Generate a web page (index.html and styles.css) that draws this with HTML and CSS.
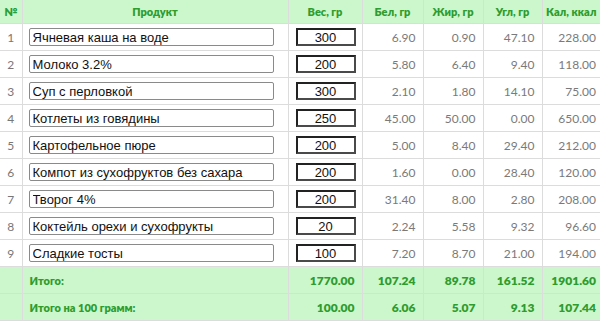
FILE: index.html
```html
<!DOCTYPE html>
<html>
<head>
<meta charset="utf-8">
<link rel="stylesheet" href="styles.css">
</head>
<body>
<table class="tbl">
  <colgroup>
    <col class="c-n"><col class="c-p"><col class="c-w"><col class="c-b"><col class="c-f"><col class="c-u"><col class="c-k">
  </colgroup>
  <thead>
    <tr><th>№</th><th>Продукт</th><th>Вес, гр</th><th>Бел, гр</th><th>Жир, гр</th><th>Угл, гр</th><th>Кал, ккал</th></tr>
  </thead>
  <tbody>
    <tr><td class="num">1</td><td><input class="name" value="Ячневая каша на воде"></td><td class="wc"><input class="wt" value="300"></td><td class="v">6.90</td><td class="v">0.90</td><td class="v">47.10</td><td class="v last">228.00</td></tr>
    <tr><td class="num">2</td><td><input class="name" value="Молоко 3.2%"></td><td class="wc"><input class="wt" value="200"></td><td class="v">5.80</td><td class="v">6.40</td><td class="v">9.40</td><td class="v last">118.00</td></tr>
    <tr><td class="num">3</td><td><input class="name" value="Суп с перловкой"></td><td class="wc"><input class="wt" value="300"></td><td class="v">2.10</td><td class="v">1.80</td><td class="v">14.10</td><td class="v last">75.00</td></tr>
    <tr><td class="num">4</td><td><input class="name" value="Котлеты из говядины"></td><td class="wc"><input class="wt" value="250"></td><td class="v">45.00</td><td class="v">50.00</td><td class="v">0.00</td><td class="v last">650.00</td></tr>
    <tr><td class="num">5</td><td><input class="name" value="Картофельное пюре"></td><td class="wc"><input class="wt" value="200"></td><td class="v">5.00</td><td class="v">8.40</td><td class="v">29.40</td><td class="v last">212.00</td></tr>
    <tr><td class="num">6</td><td><input class="name" value="Компот из сухофруктов без сахара"></td><td class="wc"><input class="wt" value="200"></td><td class="v">1.60</td><td class="v">0.00</td><td class="v">28.40</td><td class="v last">120.00</td></tr>
    <tr><td class="num">7</td><td><input class="name" value="Творог 4%"></td><td class="wc"><input class="wt" value="200"></td><td class="v">31.40</td><td class="v">8.00</td><td class="v">2.80</td><td class="v last">208.00</td></tr>
    <tr><td class="num">8</td><td><input class="name" value="Коктейль орехи и сухофрукты"></td><td class="wc"><input class="wt" value="20"></td><td class="v">2.24</td><td class="v">5.58</td><td class="v">9.32</td><td class="v last">96.60</td></tr>
    <tr><td class="num">9</td><td><input class="name" value="Сладкие тосты"></td><td class="wc"><input class="wt" value="100"></td><td class="v">7.20</td><td class="v">8.70</td><td class="v">21.00</td><td class="v last">194.00</td></tr>
  </tbody>
  <tfoot>
    <tr><td></td><td class="lbl">Итого:</td><td class="t">1770.00</td><td class="t">107.24</td><td class="t">89.78</td><td class="t">161.52</td><td class="t last">1901.60</td></tr>
    <tr><td></td><td class="lbl">Итого на 100 грамм:</td><td class="t">100.00</td><td class="t">6.06</td><td class="t">5.07</td><td class="t">9.13</td><td class="t last">107.44</td></tr>
  </tfoot>
</table>
</body>
</html>
```
FILE: styles.css
```css
html, body {
  margin: 0;
  padding: 0;
  background: #fff;
  overflow: hidden;
}
.tbl {
  border-collapse: collapse;
  table-layout: fixed;
  width: 600px;
  font-family: Lato, "Open Sans", sans-serif;
}
.c-n { width: 22px; }
.c-p { width: 266px; }
.c-w { width: 74px; }
.c-b { width: 61px; }
.c-f { width: 60px; }
.c-u { width: 59px; }
.c-k { width: 58px; }
.tbl th, .tbl td {
  border: 1px solid #dcdcdc;
  padding: 0;
}
.tbl tr:first-child th { border-top: none; }
.tbl th:first-child, .tbl td:first-child { border-left: none; }
.tbl th:last-child, .tbl td:last-child { border-right: none; }
.tbl th {
  height: 23px;
  background: #ccf7cc;
  color: #2e9c2e;
  font-size: 11px;
  font-weight: 800;
  text-align: center;
}
.tbl tbody td { height: 26px; }
.tbl tfoot td {
  height: 26px;
  background: #ccf7cc;
}
.num {
  text-align: center;
  color: #777;
  font-size: 12px;
}
.name {
  display: block;
  box-sizing: border-box;
  width: 245px;
  height: 18px;
  margin-left: 6px;
  padding: 0 3px;
  border: 1px solid #8a8a8a;
  border-radius: 2px;
  font-family: "Liberation Sans", Arial, sans-serif;
  font-size: 13px;
  color: #111;
  background: #fff;
}
.wc { text-align: center; }
.wt {
  display: block;
  box-sizing: border-box;
  width: 60px;
  height: 18px;
  margin-left: 7px;
  padding: 0;
  border: 2px solid #4a4a4a;
  border-top-color: #222;
  border-left-color: #222;
  text-align: center;
  font-family: "Liberation Sans", Arial, sans-serif;
  font-size: 13px;
  color: #111;
  background: #fff;
}
.v {
  text-align: right;
  padding-right: 7px !important;
  color: #7a7a7a;
  font-size: 12px;
}
.v.last, .t.last { padding-right: 4px !important; }
.lbl {
  padding-left: 7px !important;
  color: #2e9c2e;
  font-size: 11px;
  font-weight: 800;
}
.t {
  text-align: right;
  padding-right: 7px !important;
  color: #2e9c2e;
  font-size: 12px;
  font-weight: 800;
}
```
